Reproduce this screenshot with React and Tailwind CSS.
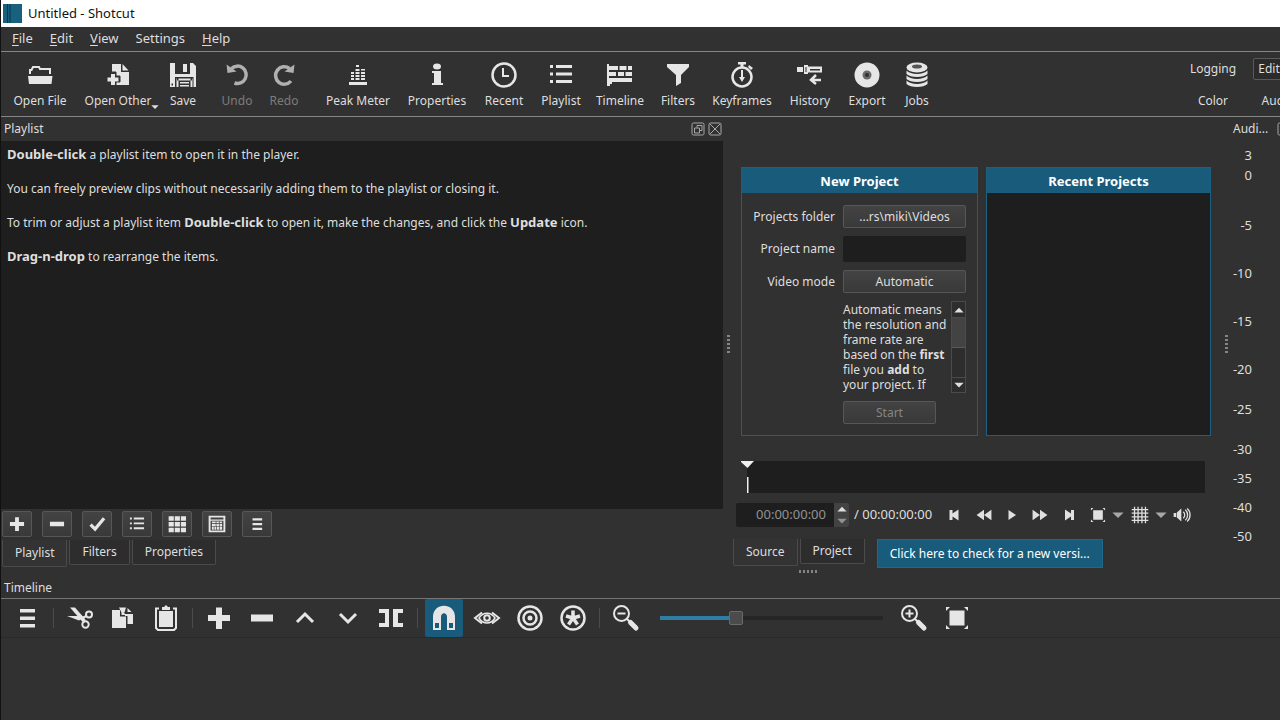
import clsx from "clsx";

const ICONS = {
  openFile: (
    <>
      <path d="M4 13V9h1.500l1.500-3h6l1 2h10v5" fill="none" stroke="currentColor" strokeWidth="2" />
      <path d="M2 15h24.500l-1 8H3z" />
    </>
  ),
  openOther: (
    <>
      <path d="M8 3h9v8h8v13H8z" />
      <path d="M18.500 3l6 6.500h-6z" />
      <path d="M7 11h5v4h4v6h-4v4H6v-4H2v-6h4z" fill="#323132" stroke="#323132" strokeWidth="1" />
      <path d="M7 13h4v3.500h3.500v4H11V24H7v-3.500H3.500v-4H7z" />
    </>
  ),
  save: (
    <path
      fillRule="evenodd"
      d="M1 2h5v11h15V2h3l3 3v21h-2.500V16H6v10H1zM2.500 22.500v2h1.500v-2zM14 3h4v8h-4zM8 17.500h15v2H8zM7.500 17.500h2V26h-2zM21.500 17.500h2V26h-2zM11 21h9v1.500h-9zM11 24h9v1.500h-9z"
    />
  ),
  undo: (
    <>
      <path d="M8.500 7.500A8.700 8.700 0 1 1 11.500 22" fill="none" stroke="currentColor" strokeWidth="3.500" />
      <path d="M3.500 3.500l1 8.500 9-1.500z" />
    </>
  ),
  redo: (
    <>
      <path d="M19.500 7.500A8.700 8.700 0 1 0 21 20" fill="none" stroke="currentColor" strokeWidth="3.500" />
      <path d="M24.500 3.500l-1 8.500-9-1.500z" />
    </>
  ),
  meter: (
    <path d="M5 21h18v3H5zM7 17h3v2H7zM7 14h3v2H7zM7 11h3v2H7zM11.500 17h4v2h-4zM11.500 14h4v2h-4zM11.500 11h4v2h-4zM11.500 8h4v2h-4zM12 4h3v2h-3zM17 17h4v2h-4zM17 14h4v2h-4zM17 11h4v2h-4zM17 8h4v1.500h-4z" />
  ),
  info: (
    <>
      <ellipse cx="14" cy="5.500" rx="4" ry="3" />
      <path d="M9 10h9v12h2v2H9v-2h2V12H9z" />
    </>
  ),
  clock: (
    <>
      <circle cx="14" cy="14" r="11.500" fill="none" stroke="currentColor" strokeWidth="2.500" />
      <path d="M13 7v8h6" fill="none" stroke="currentColor" strokeWidth="2" />
    </>
  ),
  list: <path d="M3 4h3v3H3zM9 4h16v3H9zM3 11.500h3v3H3zM9 11.500h16v3H9zM3 19h3v3H3zM9 19h16v3H9z" />,
  timeline: (
    <path d="M1 3h2v2h9v4H3v2h7v4H3v2h23v4H6v2H4v2H1zM13.500 5h7v4h-7zM22 5h4v4h-4zM12 11h6v4h-6zM19.500 11H26v4h-6.500z" />
  ),
  filter: <path d="M3 3h22v3l-8 8v8l-5 3V14L3 6z" />,
  stopwatch: (
    <>
      <circle cx="14" cy="16" r="9.500" fill="none" stroke="currentColor" strokeWidth="2.500" />
      <path d="M10 1h8v2.500h-2.500V6h-3V3.500H10zM21 4l4 3-2 2-3-3zM13 9h2v7h2l-3 5-3-5h2z" />
    </>
  ),
  history: (
    <>
      <path d="M1 6h6v5H1zM12 5.500h14v6H12zM8 4h4v9H8z" />
      <path d="M14 8h10v1.500H14zM9.500 6h1v5h-1z" fill="#323132" />
      <path d="M25 19H16M20 14l-5 5 5 4" fill="none" stroke="currentColor" strokeWidth="2.500" />
    </>
  ),
  disc: (
    <>
      <circle cx="14" cy="14" r="12.500" />
      <circle cx="14" cy="14" r="4.500" fill="#6b6b6b" />
      <circle cx="14" cy="14" r="2" fill="#323132" />
    </>
  ),
  jobs: (
    <>
      <ellipse cx="14" cy="6.500" rx="10.500" ry="5" />
      <ellipse cx="14" cy="5.500" rx="5" ry="2" fill="#555" />
      <path d="M3.500 9.500c4 4.500 17 4.500 21 0v3.500c-4 4-17 4-21 0zM3.500 14.500c4 4.500 17 4.500 21 0v3.500c-4 4-17 4-21 0zM3.500 19.500c4 4.500 17 4.500 21 0V23c-4 4-17 4-21 0z" />
    </>
  ),
  plus: <path d="M11 3.500h6V11h8v6h-8v8h-6v-8H3v-6h8z" />,
  minus: <path d="M3 10.500h22v7H3z" />,
  check: <path d="M4 15l7 7L25 5" fill="none" stroke="currentColor" strokeWidth="5" />,
  grid: (
    <path d="M1 2h8v7H1zM10.500 2h8v7h-8zM20 2h8v7h-8zM1 11h8v7H1zM10.500 11h8v7h-8zM20 11h8v7h-8zM1 20h8v7H1zM10.500 20h8v7h-8zM20 20h8v7h-8z" />
  ),
  details: (
    <path
      fillRule="evenodd"
      d="M1 1h26v26H1zM4 4v3h20V4zM4 9v15h20V9zM6 10h6v3H6zM13 10h4v3h-4zM18 10h4v3h-4zM6 14h6v3H6zM13 14h4v3h-4zM18 14h4v3h-4zM6 18h3v5H6zM10 18h3v5h-3zM14 18h3v5h-3zM18 18h4v5h-4z"
    />
  ),
  menu: <path d="M7 5h15v3.500H7zM7 12.500h15V16H7zM7 20h15v3.500H7z" />,
  cut: (
    <>
      <path d="M4 3.500h5l10.500 12-2.500 3z" />
      <path d="M1 12h11l4 2.500-3 2z" />
      <circle cx="23" cy="10.500" r="3" fill="none" stroke="currentColor" strokeWidth="2" />
      <circle cx="19.500" cy="20.500" r="3.200" fill="none" stroke="currentColor" strokeWidth="2" />
      <path d="M16 14l4.500-2M17 15l2 3" fill="none" stroke="currentColor" strokeWidth="2" />
    </>
  ),
  copy: (
    <>
      <path d="M10 3.500h7l-1.500 5h-3zM18.500 4l4 4h-4zM16 10h8v10h-5.500v-8H16z" />
      <path d="M3 6h8v6.500h6V24H3zM12.500 6l4.500 5h-4.500z" />
    </>
  ),
  paste: (
    <>
      <path d="M7 4.500H4V24l2 2h16l2-2V4.500h-3" fill="none" stroke="currentColor" strokeWidth="2" />
      <path d="M7 7h14v16H7zM10 3h2l2-2 2 2h2v3h-8z" />
    </>
  ),
  up: <path d="M6 18l8-8 8 8" fill="none" stroke="currentColor" strokeWidth="3" />,
  down: <path d="M6 10l8 8 8-8" fill="none" stroke="currentColor" strokeWidth="3" />,
  split: <path d="M2 5h10v18H2v-4h6V9H2zM16 5h10v4h-5v10h5v4H16z" />,
  magnet: (
    <>
      <path d="M3 26V13C3 -2 25 -2 25 13V26H17V13c0-5-6-5-6 0v13z" />
      <path d="M5 19h4v5H5zM19 19h4v5h-4z" fill="#195b7a" />
    </>
  ),
  scrub: (
    <>
      <path d="M9 8.500L2 14l7 5.500M19 8.500l7 5.500-7 5.500" fill="none" stroke="currentColor" strokeWidth="2" />
      <path d="M6 14c4-6.500 12-6.500 16 0-4 6.500-12 6.500-16 0z" fill="none" stroke="currentColor" strokeWidth="1.500" />
      <circle cx="14" cy="14" r="2.800" fill="none" stroke="currentColor" strokeWidth="2" />
    </>
  ),
  ripple: (
    <>
      <circle cx="14" cy="14" r="11.500" fill="none" stroke="currentColor" strokeWidth="2.500" />
      <circle cx="14" cy="14" r="6.500" fill="none" stroke="currentColor" strokeWidth="2.500" />
      <circle cx="14" cy="14" r="2.500" />
    </>
  ),
  rippleAll: (
    <>
      <circle cx="14" cy="14" r="11.500" fill="none" stroke="currentColor" strokeWidth="2.500" />
      <path d="M14 14V6.500M14 14l-7-2M14 14l7-2M14 14l-4.500 6.500M14 14l4.500 6.500" stroke="currentColor" strokeWidth="3.500" />
    </>
  ),
  zoomOut: (
    <>
      <circle cx="9.500" cy="9.500" r="7.500" fill="none" stroke="currentColor" strokeWidth="2" />
      <path d="M5.500 9.500h8" stroke="currentColor" strokeWidth="2" />
      <path d="M14.500 14.500l3 3" stroke="currentColor" strokeWidth="2" />
      <path d="M18.500 18.500l5.500 5.500" stroke="currentColor" strokeWidth="5" strokeLinecap="round" />
    </>
  ),
  zoomIn: (
    <>
      <circle cx="9.500" cy="9.500" r="7.500" fill="none" stroke="currentColor" strokeWidth="2" />
      <path d="M5.500 9.500h8M9.500 5.500v8" stroke="currentColor" strokeWidth="2" />
      <path d="M14.500 14.500l3 3" stroke="currentColor" strokeWidth="2" />
      <path d="M18.500 18.500l5.500 5.500" stroke="currentColor" strokeWidth="5" strokeLinecap="round" />
    </>
  ),
  fit: <path d="M6.500 6.500h15v15h-15zM3 3h4L3 7zM25 3h-4l4 4zM3 25h4l-4-4zM25 25h-4l4-4z" />,
  skipPrev: <path d="M3 4h6v7l12-8v22L9 17v7H3z" />,
  rewind: <path d="M14 5v18L1 14zM27 5v18L14 14z" />,
  play: <path d="M7 4l15 10L7 24z" />,
  forward: <path d="M1 5l13 9L1 23zM14 5l13 9-13 9z" />,
  skipNext: <path d="M6 3l12 8V4h6v20h-6v-7L6 25z" />,
  caret: <path d="M1 8h26L14 21z" />,
  caretUp: <path d="M1 21h26L14 8z" />,
  mesh: (
    <path
      d="M5.500 1v26M11 1v26M17 1v26M22.500 1v26M1 5.500h26M1 11h26M1 17h26M1 22.500h26"
      fill="none"
      stroke="currentColor"
      strokeWidth="2"
    />
  ),
  volume: (
    <>
      <path d="M1 11h4v6H1zM6 10l7-6v20l-7-6z" />
      <path d="M16 9c3 3 3 7 0 10M19 6c5 4 5 12 0 16M22 4c6 5 6 15 0 20" fill="none" stroke="currentColor" strokeWidth="2" />
    </>
  ),
  float: (
    <>
      <rect x="2" y="2" width="24" height="24" rx="3" fill="none" stroke="currentColor" strokeWidth="2" />
      <path d="M12 11V7h10v10h-4M7 12h10v10H7z" fill="none" stroke="currentColor" strokeWidth="2" />
    </>
  ),
  close: (
    <>
      <rect x="2" y="2" width="24" height="24" rx="3" fill="none" stroke="currentColor" strokeWidth="2" />
      <path d="M4 4l20 20M24 4L4 24" stroke="currentColor" strokeWidth="2" />
    </>
  ),
};

const Icon = ({ name, className = "size-7" }) => (
  <svg viewBox="0 0 28 28" fill="currentColor" className={clsx("shrink-0", className)} aria-hidden="true">
    {ICONS[name]}
  </svg>
);

const MENUS = ["File", "Edit", "View", "Settings", "Help"];

const TOOLS = [
  { icon: "openFile", label: "Open File", width: "w-[72px]" },
  { icon: "openOther", label: "Open Other", width: "w-[84px]", menu: true },
  { icon: "save", label: "Save", width: "w-[46px]" },
  { icon: "undo", label: "Undo", width: "w-[46px] ml-2", disabled: true },
  { icon: "redo", label: "Redo", width: "w-[48px]", disabled: true },
  { icon: "meter", label: "Peak Meter", width: "w-[84px] ml-2" },
  { icon: "info", label: "Properties", width: "w-[74px]" },
  { icon: "clock", label: "Recent", width: "w-[60px]" },
  { icon: "list", label: "Playlist", width: "w-[54px]" },
  { icon: "timeline", label: "Timeline", width: "w-[64px]" },
  { icon: "filter", label: "Filters", width: "w-[52px]" },
  { icon: "stopwatch", label: "Keyframes", width: "w-[76px]" },
  { icon: "history", label: "History", width: "w-[60px]" },
  { icon: "disc", label: "Export", width: "w-[54px]" },
  { icon: "jobs", label: "Jobs", width: "w-[46px]" },
];

const PLAYLIST_ACTIONS = [
  ["plus", "Append"],
  ["minus", "Remove"],
  ["check", "Update"],
  ["list", "View as list"],
  ["grid", "View as icons"],
  ["details", "View as details"],
  ["menu", "Playlist menu"],
];

const TRANSPORT_ACTIONS = [
  { icon: "skipPrev", label: "Skip previous", width: "w-[30px]", size: "size-3.5" },
  { icon: "rewind", label: "Rewind", width: "w-7", size: "size-4" },
  { icon: "play", label: "Play", width: "w-7", size: "size-3.5" },
  { icon: "forward", label: "Fast forward", width: "w-7", size: "size-4" },
  { icon: "skipNext", label: "Skip next", width: "w-[30px]", size: "size-3.5" },
  { icon: "fit", label: "Zoom", width: "w-[27px]", size: "size-[18px]" },
  { icon: "caret", label: "Zoom menu", width: "w-3.5", size: "size-3 text-[#a8a8a8]" },
  { icon: "mesh", label: "Grid", width: "w-[30px]", size: "size-[18px]" },
  { icon: "caret", label: "Grid menu", width: "w-3", size: "size-3 text-[#a8a8a8]" },
  { icon: "volume", label: "Volume", width: "w-[30px]", size: "size-[18px]" },
];

const TIMELINE_ACTIONS = [
  ["menu", "Timeline menu"],
  null,
  ["cut", "Cut"],
  ["copy", "Copy"],
  ["paste", "Paste"],
  null,
  ["plus", "Append"],
  ["minus", "Ripple delete"],
  ["up", "Lift"],
  ["down", "Overwrite"],
  ["split", "Split"],
  null,
  ["magnet", "Snap"],
  ["scrub", "Scrub while dragging"],
  ["ripple", "Ripple"],
  ["rippleAll", "Ripple all tracks"],
  null,
  ["zoomOut", "Zoom out"],
];

const METER_MARKS = [
  { db: "3", height: "h-5" },
  { db: "0", height: "h-5" },
  { db: "-5", height: "h-[50px]" },
  { db: "-10", height: "h-12" },
  { db: "-15", height: "h-12" },
  { db: "-20", height: "h-12" },
  { db: "-25", height: "h-10" },
  { db: "-30", height: "h-10" },
  { db: "-35", height: "h-[29px]" },
  { db: "-40", height: "h-[29px]" },
  { db: "-50", height: "h-[29px]" },
];

const RAISED = "rounded-xs border border-[#575757] bg-linear-to-b from-[#434343] to-[#393939]";

const Strong = ({ children }) => <b className="text-[13px]">{children}</b>;

const TitleBar = () => (
  <header className="-ml-px flex h-[27px] items-center gap-1.5 bg-white pl-[3px] text-[13px] text-[#111]">
    <svg viewBox="0 0 19 19" className="size-[19px]" aria-hidden="true">
      <path d="M0 0h19v19H0z" fill="#17617f" />
      <path d="M4.500 0v19M7 0v19" stroke="#0e3548" strokeWidth="1" />
    </svg>
    <h1>Untitled - Shotcut</h1>
  </header>
);

const MenuBar = () => (
  <nav className="flex h-[25px] items-center gap-[17px] border-b border-[#858585] pl-[11px] text-[13px]">
    {MENUS.map((menu) => (
      <button key={menu} type="button">
        {menu === "Settings" ? (
          menu
        ) : (
          <>
            <span className="underline underline-offset-2">{menu[0]}</span>
            {menu.slice(1)}
          </>
        )}
      </button>
    ))}
  </nav>
);

const Toolbar = () => (
  <div className="flex h-[65px] border-b border-[#858585] pl-[3px]">
    {TOOLS.map(({ icon, label, width, menu, disabled }) => (
      <button
        key={label}
        type="button"
        disabled={disabled}
        className={clsx("flex shrink-0 flex-col items-center gap-0.5 pt-[9px] whitespace-nowrap", width)}
      >
        <Icon name={icon} className={clsx("size-7", disabled ? "text-[#b0b0b0]" : "text-[#e6e6e6]")} />
        <span className={clsx("flex items-end leading-5", disabled && "text-[#7c7c7c]")}>
          {label}
          {menu && <Icon name="caret" className="-mr-2 size-2" />}
        </span>
      </button>
    ))}
    <div className="ml-auto grid w-24 shrink-0 grid-cols-[58px_50px] content-start gap-x-[11px] gap-y-2.5 pt-1.5">
      <button type="button" className="h-[22px]">Logging</button>
      <button type="button" className="h-[22px] rounded-xs border border-[#5a5a5a] bg-[#2b2b2b]">Editing</button>
      <button type="button" className="h-[22px]">Color</button>
      <button type="button" className="h-[22px]">Audio</button>
    </div>
  </div>
);

const Tab = ({ active, children }) => (
  <button
    type="button"
    className={clsx(
      "rounded-b-xs border border-t-0 border-[#4b4b4b] px-3",
      active ? "h-[27px] bg-[#343334]" : "h-[25px] bg-[#2e2d2e]"
    )}
  >
    {children}
  </button>
);

const PlaylistPanel = () => (
  <section className="flex w-[722px] min-w-0 shrink flex-col">
    <div className="flex h-6 items-center gap-[3px] pr-px pl-[3px]">
      <h2 className="mr-auto">Playlist</h2>
      <button type="button" aria-label="Float" className="text-[#a8a8a8]">
        <Icon name="float" className="size-3.5" />
      </button>
      <button type="button" aria-label="Close" className="text-[#a8a8a8]">
        <Icon name="close" className="size-3.5" />
      </button>
    </div>
    <div className="h-[368px] space-y-[17px] bg-[#1e1e1f] px-1.5 pt-[5px] leading-[17px]">
      <p><Strong>Double-click</Strong> a playlist item to open it in the player.</p>
      <p>You can freely preview clips without necessarily adding them to the playlist or closing it.</p>
      <p>
        To trim or adjust a playlist item <Strong>Double-click</Strong> to open it, make the changes, and click the{" "}
        <Strong>Update</Strong> icon.
      </p>
      <p><Strong>Drag-n-drop</Strong> to rearrange the items.</p>
    </div>
    <div className="flex gap-2.5 px-px pt-0.5">
      {PLAYLIST_ACTIONS.map(([icon, label]) => (
        <button
          key={icon}
          type="button"
          aria-label={label}
          className={clsx("flex h-[26px] w-[30px] items-center justify-center", RAISED)}
        >
          <Icon name={icon} className="size-[18px] text-[#e6e6e6]" />
        </button>
      ))}
    </div>
    <div className="flex items-start gap-0.5 px-px pt-[3px]">
      <Tab active>Playlist</Tab>
      <Tab>Filters</Tab>
      <Tab>Properties</Tab>
    </div>
  </section>
);

const Splitter = ({ className }) => (
  <div className={clsx("flex shrink-0 justify-center", className)}>
    <div className="mt-[218px] h-5 w-[3px] bg-[repeating-linear-gradient(to_bottom,#858585_0_2px,transparent_2px_4px)]" />
  </div>
);

const NewProject = () => (
  <form className="w-[237px] shrink-0 border border-[#1b6182]">
    <h2 className="h-[25px] bg-[#195b7a] text-center text-[13px] leading-[26px] font-bold text-white">New Project</h2>
    <div className="grid grid-cols-[93px_123px] items-center gap-x-2 pt-3">
      <label htmlFor="folder" className="text-right whitespace-nowrap">Projects folder</label>
      <button id="folder" type="button" className={clsx("h-[23px]", RAISED)}>...rs\miki\Videos</button>
      <label htmlFor="name" className="text-right whitespace-nowrap">Project name</label>
      <input id="name" type="text" className="my-2 h-[26px] w-full rounded-xs bg-[#1e1e1f] px-2 outline-none" />
      <label htmlFor="mode" className="text-right whitespace-nowrap">Video mode</label>
      <button id="mode" type="button" className={clsx("h-[23px]", RAISED)}>Automatic</button>
      <div className="col-start-2 mt-2 flex h-[92px] justify-between">
        <p className="w-[108px] shrink-0 pt-px leading-[15px] whitespace-nowrap">
          Automatic means<br />
          the resolution and<br />
          frame rate are<br />
          based on the <b>first</b><br />
          file you <b>add</b> to<br />
          your project. If
        </p>
        <div className="flex w-[15px] flex-col border border-[#4b4b4b] bg-[#2e2d2e]">
          <span className="flex h-4 items-center justify-center border-b border-[#4b4b4b]">
            <Icon name="caretUp" className="size-2.5" />
          </span>
          <span className="h-[30px] border-b border-[#5a5a5a] bg-[#434343]" />
          <span className="mt-auto flex h-[15px] items-center justify-center border-t border-[#4b4b4b]">
            <Icon name="caret" className="size-2.5" />
          </span>
        </div>
      </div>
      <button
        type="submit"
        disabled
        className={clsx("col-start-2 mt-2 mb-[11px] h-[23px] w-[93px] text-[#858585]", RAISED)}
      >
        Start
      </button>
    </div>
  </form>
);

const RecentProjects = () => (
  <section className="min-w-0 flex-1 border border-[#1b6182] bg-[#1e1e1f]">
    <h2 className="h-[25px] bg-[#195b7a] text-center text-[13px] leading-[26px] font-bold text-white">Recent Projects</h2>
  </section>
);

const Transport = () => (
  <div className="mt-[9px] ml-[3px] flex h-[26px] items-center">
    <div className="flex h-6 w-[113px] shrink-0 overflow-hidden rounded-xs bg-[#1e1e1f] text-[13px]">
      <input
        type="text"
        aria-label="Position"
        defaultValue="00:00:00:00"
        className="min-w-0 flex-1 text-right text-[#929292] outline-none"
      />
      <span className="ml-2 flex w-[15px] flex-col items-center justify-center gap-0.5 bg-[#434343]">
        <Icon name="caretUp" className="size-2.5" />
        <Icon name="caret" className="size-2.5 text-[#929292]" />
      </span>
    </div>
    <span className="ml-[5px] w-[86px] text-[13px] whitespace-nowrap">/ 00:00:00:00</span>
    <div className="flex items-center text-[#e0e0e0]">
      {TRANSPORT_ACTIONS.map(({ icon, label, width, size }) => (
        <button key={label} type="button" aria-label={label} className={clsx("flex justify-center", width)}>
          <Icon name={icon} className={size} />
        </button>
      ))}
    </div>
  </div>
);

const Player = () => (
  <section className="flex min-w-0 flex-1 flex-col pt-[50px]">
    <div className="mr-[9px] ml-2 flex gap-2">
      <NewProject />
      <RecentProjects />
    </div>
    <div className="mt-[25px] mr-[15px] ml-2 flex">
      <svg viewBox="0 0 14 32" className="-mr-2 h-8 w-3.5 shrink-0" fill="#f0f0f0" aria-hidden="true">
        <path d="M-1 0h14L6.500 7z" />
        <path d="M6 16h1.500v16H6z" />
      </svg>
      <div className="-z-10 h-8 flex-1 bg-[#1e1e1f]" />
    </div>
    <Transport />
    <div className="mt-[11px] flex items-start gap-0.5">
      <Tab active>Source</Tab>
      <Tab>Project</Tab>
      <button type="button" className="ml-2.5 h-[29px] border border-[#1b6a8c] bg-[#195b7a] px-3 whitespace-nowrap text-white">
        Click here to check for a new versi...
      </button>
    </div>
    <div className="mt-0.5 ml-[66px] h-[3px] w-5 bg-[repeating-linear-gradient(to_right,#858585_0_2px,transparent_2px_4px)]" />
  </section>
);

const AudioMeter = () => (
  <section className="w-12 shrink-0">
    <div className="flex h-6 items-center gap-2 pl-px whitespace-nowrap">
      <h2 className="w-9 shrink-0">Audi...</h2>
      <Icon name="float" className="size-3.5 text-[#a8a8a8]" />
    </div>
    <ul className="w-5 pt-1 text-[13px]">
      {METER_MARKS.map(({ db, height }) => (
        <li key={db} className={clsx("flex items-end justify-end leading-5", height)}>{db}</li>
      ))}
    </ul>
  </section>
);

const TimelineButton = ({ icon, label }) => (
  <button
    type="button"
    aria-label={label}
    className={clsx("flex h-[38px] w-[38px] shrink-0 items-center justify-center", icon === "magnet" && "rounded-xs bg-[#195b7a]")}
  >
    <Icon name={icon} />
  </button>
);

const Timeline = () => (
  <section className="flex flex-1 flex-col">
    <h2 className="flex h-[22px] items-center border-b border-[#757575] pl-[3px]">Timeline</h2>
    <div className="flex h-[39px] items-center gap-[5px] border-b border-[#2a2a2a] pl-[7px] text-[#e6e6e6]">
      {TIMELINE_ACTIONS.map((action, i) =>
        action ? (
          <TimelineButton key={action[1]} icon={action[0]} label={action[1]} />
        ) : (
          <span key={i} className="flex w-[5px] shrink-0 justify-center">
            <span className="h-5 w-px bg-[#4b4b4b]" />
          </span>
        )
      )}
      <input
        type="range"
        aria-label="Timeline zoom"
        defaultValue="33"
        className="mr-[7px] ml-2.5 h-4 w-[223px] shrink-0 appearance-none [&::-webkit-slider-runnable-track]:h-1 [&::-webkit-slider-runnable-track]:bg-[linear-gradient(to_right,#2f7da3_34%,#262626_34%)] [&::-webkit-slider-thumb]:-mt-[5px] [&::-webkit-slider-thumb]:size-3.5 [&::-webkit-slider-thumb]:appearance-none [&::-webkit-slider-thumb]:rounded-xs [&::-webkit-slider-thumb]:border [&::-webkit-slider-thumb]:border-[#6b6b6b] [&::-webkit-slider-thumb]:bg-[#4b4b4b]"
      />
      <TimelineButton icon="zoomIn" label="Zoom in" />
      <TimelineButton icon="fit" label="Zoom to fit" />
    </div>
  </section>
);

const App = () => {
  return (
    <div className="isolate flex min-h-screen w-full flex-col overflow-x-clip border-l border-[#111] bg-[#323132] font-['Noto_Sans',sans-serif] text-[12px] text-[#dedede]">
      <TitleBar />
      <MenuBar />
      <Toolbar />
      <main className="flex h-[460px]">
        <PlaylistPanel />
        <Splitter className="w-2.5" />
        <Player />
        <Splitter className="w-3" />
        <AudioMeter />
      </main>
      <Timeline />
    </div>
  );
};

export default App;
